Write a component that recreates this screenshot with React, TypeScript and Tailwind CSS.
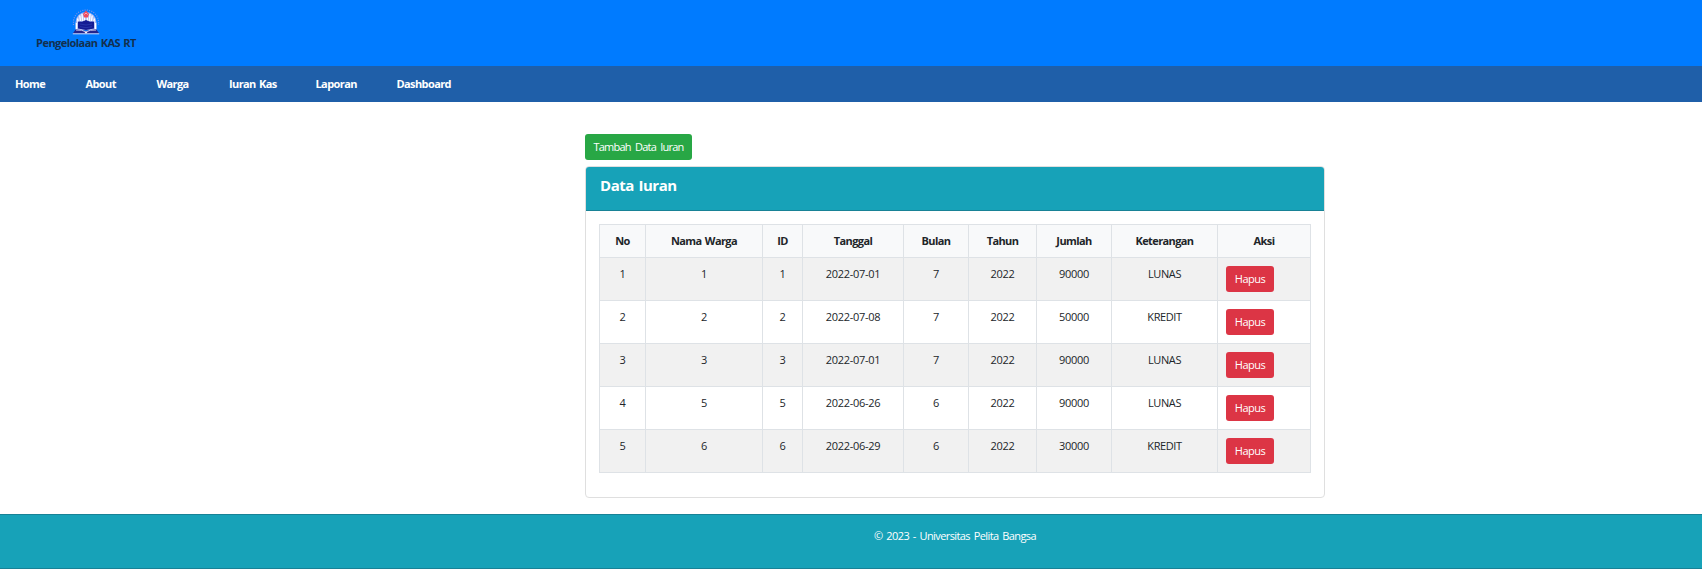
const navItems = [
  { label: 'Home', width: 'w-[70.5px]' },
  { label: 'About', width: 'w-[71px]' },
  { label: 'Warga', width: 'w-[72.5px]' },
  { label: 'Iuran Kas', width: 'w-[86.5px]' },
  { label: 'Laporan', width: 'w-[81px]' },
  { label: 'Dashboard', width: 'w-[96px]' },
];

const columns = [
  { label: 'No', width: 'w-[46px]' },
  { label: 'Nama Warga', width: 'w-[117px]' },
  { label: 'ID', width: 'w-[40px]' },
  { label: 'Tanggal', width: 'w-[101px]' },
  { label: 'Bulan', width: 'w-[65px]' },
  { label: 'Tahun', width: 'w-[68px]' },
  { label: 'Jumlah', width: 'w-[75px]' },
  { label: 'Keterangan', width: 'w-[106px]' },
  { label: 'Aksi', width: 'w-[93px]' },
];

const rows = [
  ['1', '1', '1', '2022-07-01', '7', '2022', '90000', 'LUNAS'],
  ['2', '2', '2', '2022-07-08', '7', '2022', '50000', 'KREDIT'],
  ['3', '3', '3', '2022-07-01', '7', '2022', '90000', 'LUNAS'],
  ['4', '5', '5', '2022-06-26', '6', '2022', '90000', 'LUNAS'],
  ['5', '6', '6', '2022-06-29', '6', '2022', '30000', 'KREDIT'],
];

function Logo() {
  return (
    <svg width="28" height="26" viewBox="0 0 28 26" aria-hidden="true">
      <path d="M1.500 16V13a12.500 12 0 0 1 25 0v3" fill="none" stroke="#7f93e8" strokeWidth="1.200" strokeDasharray="1 1.300" />
      <path d="M3.500 21V13.500a10.500 10.500 0 0 1 21 0V21z" fill="#a8b8f6" />
      <path
        d="M4.500 20v-6M6.500 14 5.500 9.500M8.500 12 7.800 6.500M10.500 12 10 5M17.500 12l.5-7M19.500 12l.7-5.500M21.500 14l1-4.500M23.500 20v-6M12.500 12V8M15.500 12V8"
        stroke="#fff"
        strokeWidth="1.400"
      />
      <path d="m14 1.500 3 3.500-1.200 3.500h-3.600L11 5z" fill="#f04a5e" />
      <path d="M12.300 5.500 14 4l1.700 1.500" fill="none" stroke="#ffd9df" strokeWidth=".7" />
      <path d="m6 12.500 4 .3 4-1.800 4 1.800 4-.3v7L14 21l-8-1.500z" fill="#141b93" />
      <path d="m8 15 6 1 6-1M8 17.700l6 1 6-1" fill="none" stroke="#2a3aae" strokeWidth=".8" />
      <path d="M4 20 .8 24.500h26.400L24 20l-10 2z" fill="#24248c" />
      <path d="M4 21q6-.5 10 1.900 4-2.400 10-1.900M.8 24.800h26.400" fill="none" stroke="#e6e2fa" strokeWidth=".9" />
      <path d="m12.500 23 1.500 1.800 1.500-1.800z" fill="#fff" />
    </svg>
  );
}

export default function App() {
  return (
    <div className="flex h-[569px] flex-col overflow-hidden bg-white font-['Open_Sans','Noto_Sans',sans-serif] text-[11px] leading-[17px] tracking-[-0.3px] text-[#212529]">
      <header className="flex h-[66px] shrink-0 bg-[#007bff] pt-[9px] pl-[36px]">
        <div className="flex w-[100px] flex-col items-center">
          <Logo />
          <span className="-mt-px font-bold tracking-[-0.55px] whitespace-nowrap text-[#13304f] [word-spacing:1px]">
            Pengelolaan KAS RT
          </span>
        </div>
      </header>
      <nav className="flex h-9 shrink-0 items-center bg-[#1f5fa9] pb-[2px] pl-[15px] font-bold tracking-[-0.6px] text-white [word-spacing:1px]">
        {navItems.map((item) => (
          <a key={item.label} href="#" className={`${item.width} whitespace-nowrap`}>
            {item.label}
          </a>
        ))}
      </nav>
      <main className="ml-[585px] h-[412px] w-[740px] shrink-0 pt-8">
        <button className="flex h-[26px] w-[107px] items-center justify-center rounded-[3px] bg-[#28a745] pb-[2px] tracking-[-0.75px] whitespace-nowrap text-white [word-spacing:2px]">
          Tambah Data Iuran
        </button>
        <section className="mt-[6px] h-[332px] overflow-hidden rounded border border-[#dfdfdf]">
          <h1 className="h-11 border-b border-[#188296] bg-[#17a2b8] pt-2 pl-[14px] text-[15px] leading-[20px] font-bold tracking-[-0.45px] text-white [word-spacing:1px]">
            Data Iuran
          </h1>
          <table className="mt-[13px] ml-[13px] w-[712px] table-fixed border-collapse text-center">
            <thead>
              <tr className="h-[33px] bg-[#f8f9fa]">
                {columns.map((column) => (
                  <th
                    key={column.label}
                    className={`${column.width} border border-[#dee2e6] p-0 pb-[2px] font-bold tracking-[-0.6px] [word-spacing:1px]`}
                  >
                    {column.label}
                  </th>
                ))}
              </tr>
            </thead>
            <tbody>
              {rows.map((row) => (
                <tr key={row[0]} className="h-[43px] odd:bg-[#f1f1f1]">
                  {row.map((value, index) => (
                    <td key={index} className="border border-[#dee2e6] p-0 pt-[7px] align-top nth-[8]:tracking-[-0.4px]">
                      {value}
                    </td>
                  ))}
                  <td className="border border-[#dee2e6] p-0 pl-2">
                    <button className="flex h-[26px] w-12 items-center justify-center rounded-[3px] bg-[#dc3545] pb-[2px] tracking-[-0.5px] text-white">
                      Hapus
                    </button>
                  </td>
                </tr>
              ))}
            </tbody>
          </table>
        </section>
      </main>
      <footer className="h-[55px] shrink-0 border-y border-[#188296] bg-[#17a2b8] pt-3 pl-[208px] text-center tracking-[-0.6px] text-white [word-spacing:1.5px]">
        © 2023 - Universitas Pelita Bangsa
      </footer>
    </div>
  );
}
